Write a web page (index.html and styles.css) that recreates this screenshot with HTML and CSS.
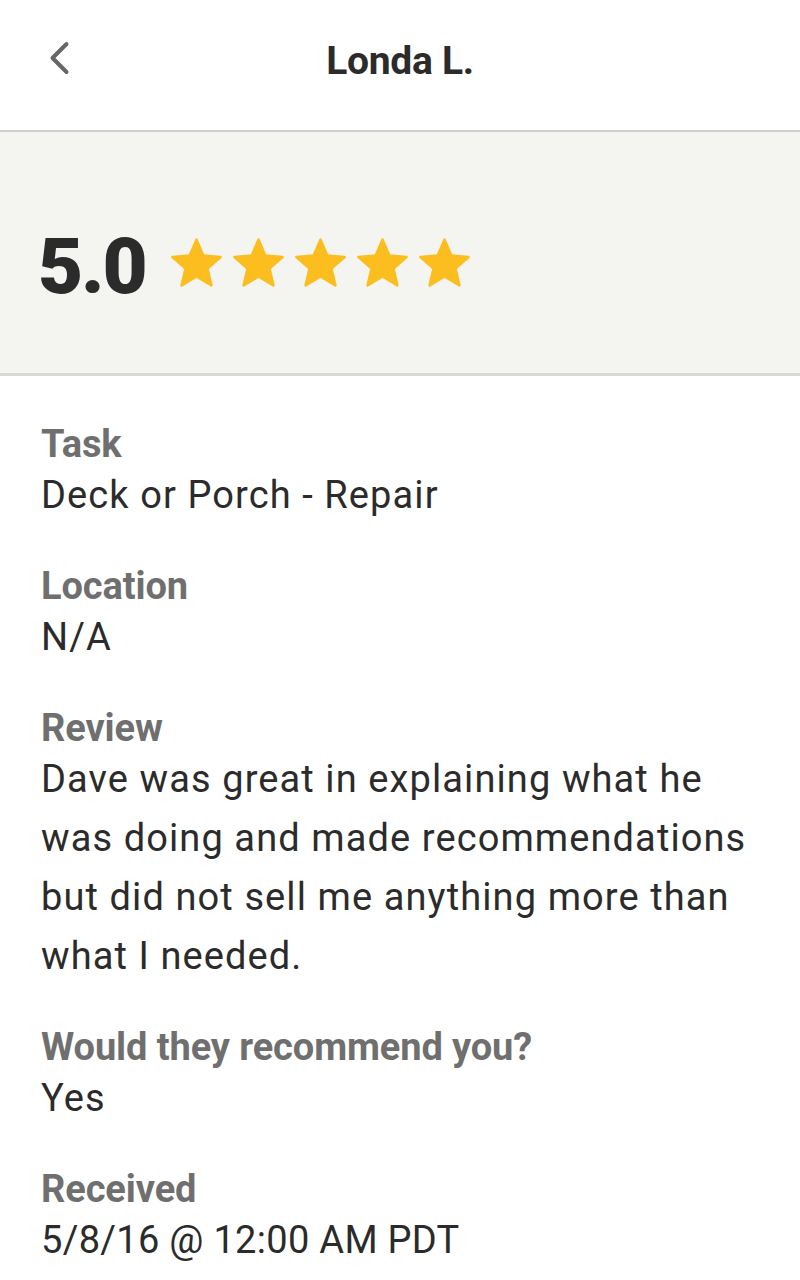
FILE: index.html
```html
<!DOCTYPE html>
<html>
<head>
<meta charset="utf-8">
<link rel="stylesheet" href="styles.css">
</head>
<body>
<header class="topbar">
  <button class="back" aria-label="Back">
    <svg width="22" height="34" viewBox="0 0 22 34"><path d="M18.5 3 L4.5 17 L18.5 31" fill="none" stroke="#666666" stroke-width="4" stroke-linecap="round" stroke-linejoin="round"/></svg>
  </button>
  <h1 class="title">Londa L.</h1>
</header>
<section class="rating">
  <span class="score">5.0</span>
  <div class="stars">
    <svg class="star" viewBox="1.4 1.4 21.2 20.2"><path d="M12 17.27L18.18 21l-1.64-7.03L22 9.24l-7.19-.61L12 2 9.19 8.63 2 9.24l5.46 4.73L5.82 21z"/></svg>
    <svg class="star" viewBox="1.4 1.4 21.2 20.2"><path d="M12 17.27L18.18 21l-1.64-7.03L22 9.24l-7.19-.61L12 2 9.19 8.63 2 9.24l5.46 4.73L5.82 21z"/></svg>
    <svg class="star" viewBox="1.4 1.4 21.2 20.2"><path d="M12 17.27L18.18 21l-1.64-7.03L22 9.24l-7.19-.61L12 2 9.19 8.63 2 9.24l5.46 4.73L5.82 21z"/></svg>
    <svg class="star" viewBox="1.4 1.4 21.2 20.2"><path d="M12 17.27L18.18 21l-1.64-7.03L22 9.24l-7.19-.61L12 2 9.19 8.63 2 9.24l5.46 4.73L5.82 21z"/></svg>
    <svg class="star" viewBox="1.4 1.4 21.2 20.2"><path d="M12 17.27L18.18 21l-1.64-7.03L22 9.24l-7.19-.61L12 2 9.19 8.63 2 9.24l5.46 4.73L5.82 21z"/></svg>
  </div>
</section>
<main class="details">
  <div class="item">
    <div class="label">Task</div>
    <div class="value">Deck or Porch - Repair</div>
  </div>
  <div class="item">
    <div class="label">Location</div>
    <div class="value">N/A</div>
  </div>
  <div class="item">
    <div class="label">Review</div>
    <div class="value">Dave was great in explaining what he was doing and made recommendations but did not sell me anything more than what I needed.</div>
  </div>
  <div class="item">
    <div class="label">Would they recommend you?</div>
    <div class="value">Yes</div>
  </div>
  <div class="item">
    <div class="label">Received</div>
    <div class="value date">5/8/16 @ 12:00 AM PDT</div>
  </div>
</main>
</body>
</html>
```

FILE: styles.css
```css
* { box-sizing: border-box; }
html, body { margin: 0; padding: 0; background: #ffffff; }
body { font-family: Roboto, "Liberation Sans", sans-serif; color: #2b2b2b; width: 800px; }

.topbar {
  height: 132px;
  border-bottom: 2px solid #cfcfcf;
  display: flex;
  align-items: center;
  justify-content: center;
  position: relative;
}
.back {
  position: absolute;
  left: 48px;
  top: 41px;
  background: none;
  border: 0;
  padding: 0;
  width: 22px;
  height: 34px;
  display: flex;
  align-items: center;
}
.title {
  margin: 0 0 8px 0;
  font-size: 39px;
  font-weight: 700;
  letter-spacing: -0.3px;
  color: #2b2b2b;
}

.rating {
  height: 244px;
  background: #f4f4f1;
  border-bottom: 3px solid #d8d8d5;
  display: flex;
  align-items: center;
  padding: 0 0 0 38px;
  gap: 26px;
}
.score {
  font-size: 78px;
  font-weight: 900;
  letter-spacing: -2.2px;
  color: #2b2b2b;
  line-height: 1;
  margin-top: 28px;
}
.stars { display: flex; gap: 11px; margin-top: 20px; }
.star { width: 51px; height: 49px; fill: #fcbd1f; stroke: #fcbd1f; stroke-width: 1.1; stroke-linejoin: round; }

.details { padding: 46px 30px 0 41px; }
.item { margin-bottom: 39px; }
.label {
  font-size: 38px;
  line-height: 44px;
  font-weight: 700;
  color: #6f6f6f;
  letter-spacing: -0.1px;
}
.value {
  font-size: 38px;
  line-height: 59px;
  font-weight: 400;
  color: #2b2b2b;
  letter-spacing: 1.1px;
}
.value.date { letter-spacing: 0.3px; }
```
